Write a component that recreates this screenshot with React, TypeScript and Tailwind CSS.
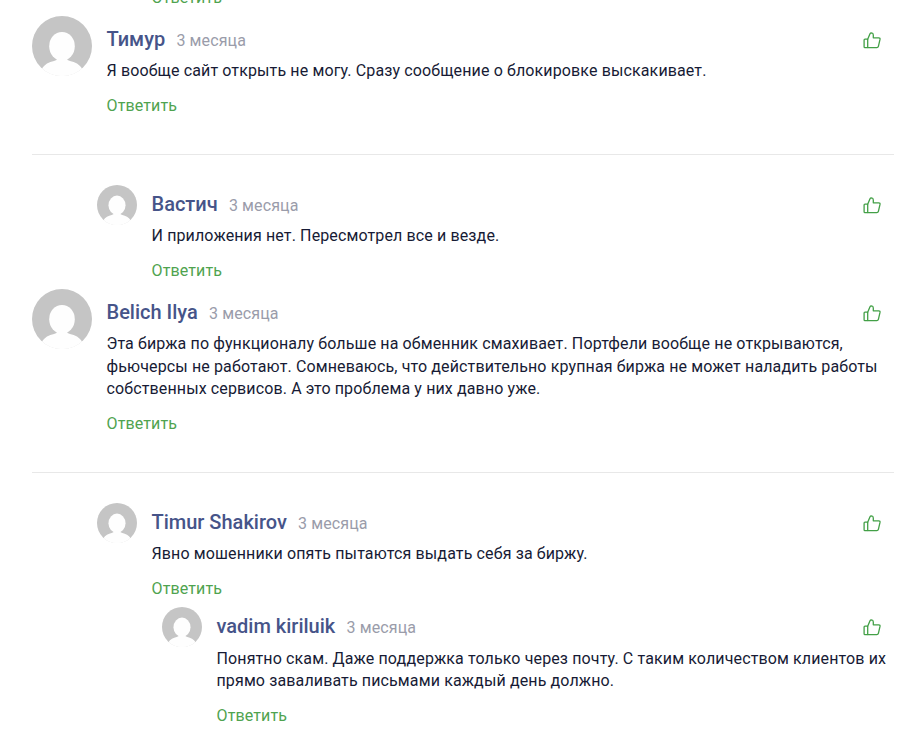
import clsx from "clsx"

type Comment = {
  name: string
  text: string
  level: 0 | 1 | 2
  divider?: boolean
}

const comments: Comment[] = [
  {
    name: "Тимур",
    text: "Я вообще сайт открыть не могу. Сразу сообщение о блокировке выскакивает.",
    level: 0,
    divider: true
  },
  {
    name: "Вастич",
    text: "И приложения нет. Пересмотрел все и везде.",
    level: 1
  },
  {
    name: "Belich Ilya",
    text: "Эта биржа по функционалу больше на обменник смахивает. Портфели вообще не открываются, фьючерсы не работают. Сомневаюсь, что действительно крупная биржа не может наладить работы собственных сервисов. А это проблема у них давно уже.",
    level: 0,
    divider: true
  },
  {
    name: "Timur Shakirov",
    text: "Явно мошенники опять пытаются выдать себя за биржу.",
    level: 1
  },
  {
    name: "vadim kiriluik",
    text: "Понятно скам. Даже поддержка только через почту. С таким количеством клиентов их прямо заваливать письмами каждый день должно.",
    level: 2
  }
]

const indents = ["pl-0", "pl-[65px]", "pl-[130px]"]

const textMargins = [
  "mt-[6.2px] mb-[11.3px]",
  "mt-[6.3px] mb-[11.7px]",
  "mt-[6.8px] mb-[11.2px]"
]

const Avatar = ({ className }: { className: string }) => (
  <svg viewBox="0 0 60 60" className={clsx("shrink-0 rounded-full", className)}>
    <rect width="60" height="60" fill="#c5c5c5" />
    <path d="M9.5 53C12.5 48.5 17 45.8 22 45Q25 44.5 26 42H34Q35 44.5 38 45C43 45.8 47.5 48.5 50.5 53V60H9.5Z" fill="#fefefe" />
    <rect y="52.7" width="60" height="8" fill="#fefefe" />
    <ellipse cx="30" cy="30.3" rx="12.8" ry="14.4" fill="#fefefe" />
  </svg>
)

const ThumbIcon = () => (
  <svg viewBox="0 0 18 18" className="w-[18px] h-[18px]" fill="none" stroke="#43a047" strokeWidth="1.3" strokeLinejoin="round">
    <path d="M4.7 7.2H2Q1.1 7.2 1.1 8.1V14.7Q1.1 15.6 2 15.6H4.7Z" />
    <path d="M4.7 7.2L6.9 1.9Q7.3 .9 8.4 .9Q10.3 1 10.3 2.9V5.8H15.8Q17.3 5.9 17 7.4L15.4 14.3Q15.1 15.6 13.8 15.6H4.7" />
  </svg>
)

const ReplyButton = () => (
  <button className="block h-6 leading-6 tracking-[0.12px] text-[#4fa34f]">Ответить</button>
)

const CommentItem = ({ name, text, level, divider }: Comment) => {
  const small = level > 0

  return (
    <article
      className={clsx(
        "flex items-start",
        indents[level],
        divider && "border-b border-[#e8e8e8] pb-[36.1px] mb-[30px]",
        small && "pb-[5.6px]"
      )}
    >
      <Avatar className={small ? "w-10 h-10" : "w-[60px] h-[60px]"} />
      <div className={clsx("flex-1 ml-[14.5px]", small ? "pt-1" : "pt-2")}>
        <header className="flex items-center h-[30px] pr-[13px]">
          <h3 className="text-xl font-medium text-[#465489]">{name}</h3>
          <time className="ml-[11.2px] mt-[3.8px] tracking-[0.12px] text-[#9a9caa]">3 месяца</time>
          <button className="ml-auto mt-1" aria-label="Нравится">
            <ThumbIcon />
          </button>
        </header>
        <p className={clsx("leading-[22.4px] tracking-[0.125px] text-[#171b35]", textMargins[level])}>
          {text}
        </p>
        <ReplyButton />
      </div>
    </article>
  )
}

const App = () => {
  return (
    <main className="w-full h-[730px] overflow-hidden bg-white pl-8 pr-[23px] text-base font-['Roboto',sans-serif]">
      {/* Tail of the previous thread */}
      <div className="-mt-[14px] h-[30px] pl-[119.5px]">
        <ReplyButton />
      </div>
      {comments.map((comment) => (
        <CommentItem key={comment.name} {...comment} />
      ))}
    </main>
  )
}

export default App
